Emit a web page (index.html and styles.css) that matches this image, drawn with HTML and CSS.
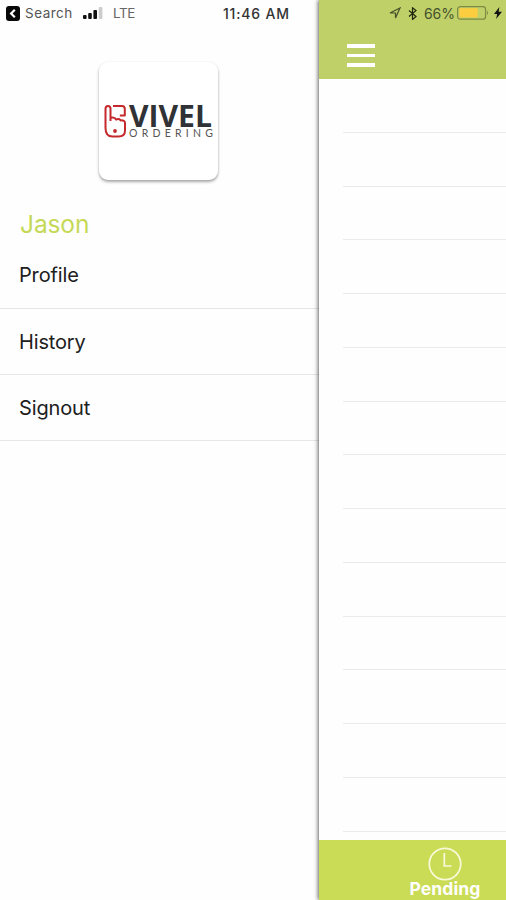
FILE: index.html
```html
<!DOCTYPE html>
<html lang="en">
<head>
<meta charset="utf-8">
<meta name="viewport" content="width=device-width, initial-scale=1">
<title>Vivel Ordering</title>
<link rel="stylesheet" href="styles.css">
</head>
<body>
<div class="app">
  <aside class="drawer">
    <div class="status">
      <svg class="back" viewBox="0 0 14 15"><rect width="14" height="15" rx="3"/><path d="M8.8 3.7 5.1 7.5l3.7 3.8"/></svg>
      <span class="search">Search</span>
      <svg class="signal" viewBox="0 0 20 12"><rect x="0" y="8" width="3.6" height="4" rx="1"/><rect x="5.2" y="6" width="3.6" height="6" rx="1"/><rect x="10.4" y="3" width="3.6" height="9" rx="1"/><rect class="off" x="15.8" y="0" width="3.6" height="12" rx="1"/></svg>
      <span class="carrier">LTE</span>
      <time class="time">11:46 AM</time>
    </div>
    <div class="logo">
      <svg viewBox="0 0 119 118">
        <g class="mark"><path d="M11.500 59V46.500Q11.500 44 9 44T6.500 47v19q0 8.500 7 8.500h6q6.500 0 6.500-6V61q0-3-4.500-2.600Q20.500 56 17 57.500 15.500 54.500 11.500 56M14 44h9q2.800 0 2.800 3v6.500h-5"/><circle cx="16" cy="69" r="1.9"/></g>
        <text class="brand" x="30" y="65" textLength="83" lengthAdjust="spacingAndGlyphs">VIVEL</text>
        <text class="sub" x="30" y="75.3" textLength="84">ORDERING</text>
      </svg>
    </div>
    <h1 class="name">Jason</h1>
    <nav class="menu">
      <a class="item profile">Profile</a>
      <a class="item">History</a>
      <a class="item">Signout</a>
    </nav>
  </aside>
  <main class="screen">
    <header class="header">
      <div class="indicators">
        <svg class="location" viewBox="0 0 12 12"><path d="M1 6 11 1 6.500 11V6Z"/></svg>
        <svg class="bluetooth" viewBox="0 0 9 13"><path d="m1 3.500 7 6-3.500 3V.8L8 3.500l-7 6"/></svg>
        <span class="percent">66%</span>
        <svg class="battery" viewBox="0 0 32 14"><rect class="shell" x=".6" y=".6" width="28" height="12.6" rx="2.8"/><rect class="charge" x="2.4" y="2.2" width="18.2" height="9.4" rx="1"/><path d="M30 4.500q2 2.400 0 4.800Z"/></svg>
        <svg class="bolt" viewBox="0 0 8 12"><path d="M5.400 0 0 7h3.200L2.100 12 8 4.800H4.600Z"/></svg>
      </div>
      <div class="burger"><i></i><i></i><i></i></div>
    </header>
    <div class="list">
      <div class="row"></div><div class="row"></div><div class="row"></div><div class="row"></div><div class="row"></div><div class="row"></div><div class="row"></div><div class="row"></div><div class="row"></div><div class="row"></div><div class="row"></div><div class="row"></div><div class="row"></div><div class="row"></div>
    </div>
    <footer class="tab">
      <svg class="clock" viewBox="0 0 34 34"><circle cx="17" cy="17" r="15.700"/><path d="M16.300 6v13h7.200"/></svg>
      <span class="label">Pending</span>
    </footer>
  </main>
</div>
</body>
</html>
```
FILE: styles.css
```css
* { box-sizing: border-box; }
body { margin: 0; background: #fefefe; font-family: Inter, "Liberation Sans", sans-serif; color: #202020; }
svg { display: block; flex: none; }
.app { display: flex; width: 506px; height: 900px; overflow: hidden; }
.drawer { width: 319px; flex: none; background: #fefefe; }
.status { display: flex; align-items: center; height: 26px; padding-left: 6px; font-size: 14px; white-space: nowrap; }
.back { width: 14px; height: 15px; }
.back rect { fill: #080808; }
.back path { fill: none; stroke: #fff; stroke-width: 2.2; }
.search { width: 51px; margin-left: 5px; color: #555; font-size: 13.5px; letter-spacing: .5px; }
.signal { width: 20px; height: 12px; margin-left: 7px; fill: #111; }
.signal .off { fill: #ccc; }
.carrier { width: 24px; margin-left: 10px; color: #666; font-size: 13.5px; letter-spacing: -.4px; }
.time { margin-left: 86px; color: #333; font-size: 14px; font-weight: 500; letter-spacing: .8px; }
.logo { width: 119px; height: 118px; margin: 36px 0 0 99px; border-radius: 9px; background: #fff; box-shadow: 0 2px 3px #0005, 0 0 2px #0001; }
.logo svg { width: 119px; height: 118px; }
.mark path { fill: none; stroke: #c5292d; stroke-width: 2; stroke-linejoin: round; }
.mark circle { fill: #c5292d; }
.brand { fill: #303236; font: 700 30px "Open Sans", sans-serif; }
.sub { fill: #555; font: 400 10.5px Lato, sans-serif; }
.name { margin: 28px 0 0 20px; height: 32px; color: #c5d957; font-size: 24.5px; line-height: 32px; font-weight: 400; letter-spacing: -.1px; }
.menu { display: flex; flex-direction: column; }
.item { display: flex; align-items: center; height: 66px; padding-left: 19px; border-bottom: 1px solid #e6e6e6; font-size: 20px; letter-spacing: -.15px; }
.profile { height: 69px; padding-top: 2px; }
.screen { position: relative; display: flex; flex-direction: column; width: 187px; background: #fefefe; box-shadow: -1px 0 4px #0009; }
.header { height: 79px; background: #bfd068; }
.indicators { display: flex; align-items: center; height: 26px; padding-left: 70px; color: #46502c; }
.location { width: 12px; height: 12px; fill: none; stroke: #46502c; stroke-width: 1.2; }
.bluetooth { width: 9px; height: 13px; margin-left: 7px; fill: none; stroke: #20260f; stroke-width: 1.2; }
.percent { width: 31px; margin-left: 7px; font-size: 14px; letter-spacing: -.1px; white-space: nowrap; }
.battery { width: 32px; height: 14px; margin-left: 2px; fill: #7d8a43; }
.shell { fill: none; stroke: #7d8a43; stroke-width: 1.2; }
.charge { fill: #fccd3e; }
.bolt { width: 8px; height: 12px; margin-left: 5px; fill: #111; }
.burger { display: flex; flex-direction: column; gap: 6px; width: 28px; margin: 18px 0 0 28px; }
.burger i { height: 3.5px; background: #fff; }
.list { height: 761px; padding-left: 24px; }
.row { height: 53.75px; border-bottom: 1px solid #ebebeb; }
.tab { display: flex; flex-direction: column; align-items: center; height: 60px; padding: 7px 0 0 65px; background: #cadb56; color: #fff; }
.clock { width: 34px; height: 34px; fill: none; stroke: #f8fbd9; stroke-width: 1.7; }
.label { font-size: 17.5px; line-height: 18px; font-weight: 700; letter-spacing: .1px; margin-top: -1px; }
```
